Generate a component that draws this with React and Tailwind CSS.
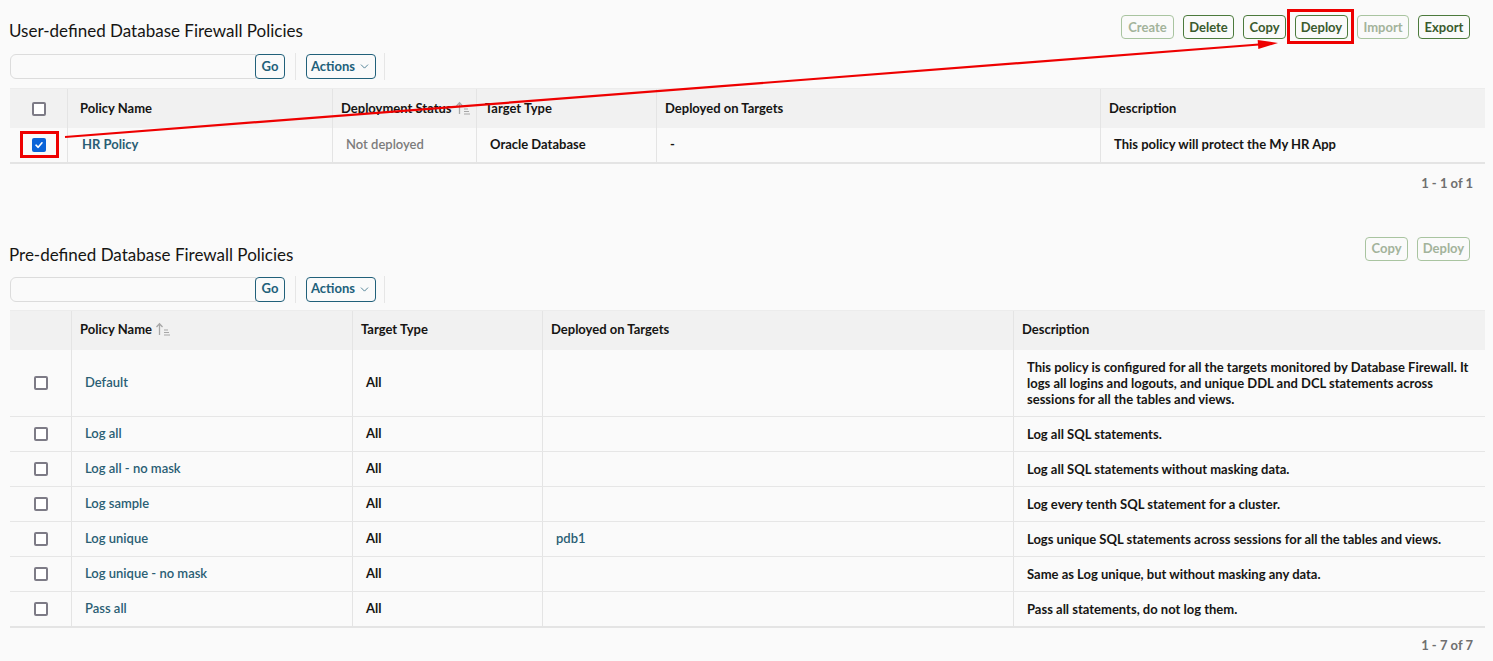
import React from 'react';
import { ChevronDown } from 'lucide-react';

const userPolicies = [
  { name: 'HR Policy', status: 'Not deployed', type: 'Oracle Database', targets: '-', desc: 'This policy will protect the My HR App', checked: true },
];

const predefined = [
  { name: 'Default', type: 'All', targets: '', desc: 'This policy is configured for all the targets monitored by Database Firewall. It logs all logins and logouts, and unique DDL and DCL statements across sessions for all the tables and views.' },
  { name: 'Log all', type: 'All', targets: '', desc: 'Log all SQL statements.' },
  { name: 'Log all - no mask', type: 'All', targets: '', desc: 'Log all SQL statements without masking data.' },
  { name: 'Log sample', type: 'All', targets: '', desc: 'Log every tenth SQL statement for a cluster.' },
  { name: 'Log unique', type: 'All', targets: 'pdb1', desc: 'Logs unique SQL statements across sessions for all the tables and views.' },
  { name: 'Log unique - no mask', type: 'All', targets: '', desc: 'Same as Log unique, but without masking any data.' },
  { name: 'Pass all', type: 'All', targets: '', desc: 'Pass all statements, do not log them.' },
];

function Checkbox({ checked }) {
  if (checked) {
    return (
      <span className="inline-flex w-[14px] h-[14px] rounded-[2px] bg-[#0a63d8] items-center justify-center">
        <svg width="10" height="10" viewBox="0 0 10 10" fill="none">
          <path d="M2 5.2 L4.2 7.3 L8 2.8" stroke="white" strokeWidth="1.6" strokeLinecap="round" strokeLinejoin="round" />
        </svg>
      </span>
    );
  }
  return <span className="inline-block w-[14px] h-[14px] rounded-[2px] border-2 border-[#7d7b86] bg-white" />;
}

function ActionButton({ label, disabled, width }) {
  return (
    <button
      className={`h-[24px] rounded-[4px] border text-[13px] font-bold leading-none bg-[#fafafa] ${width} ${
        disabled ? 'border-[#a9c4a0] text-[#a3b39b]' : 'border-[#4c7a3c] text-[#3b5a2e]'
      }`}
    >
      {label}
    </button>
  );
}

function SortIcon() {
  return (
    <svg width="16" height="14" viewBox="0 0 16 14" className="inline-block ml-[3px] -mt-[2px]" fill="none">
      <path d="M4.5 13 V2 M1.5 5 L4.5 1.8 L7.5 5" stroke="#a7a7a7" strokeWidth="1.3" />
      <path d="M9 8 H13 M9 10.5 H14 M9 13 H15" stroke="#a7a7a7" strokeWidth="1" />
    </svg>
  );
}

function Toolbar() {
  return (
    <div className="flex items-center h-[25px]">
      <div className="w-[246px] h-[25px] border border-[#dcdcdc] rounded-l-[6px] bg-[#fafafa]" />
      <button className="w-[30px] h-[25px] -ml-[1px] border border-[#21607a] rounded-[4px] text-[13px] font-bold text-[#21607a]">Go</button>
      <div className="w-px h-[27px] bg-[#e6e6e6] mx-[10px]" />
      <button className="w-[70px] h-[25px] border border-[#21607a] rounded-[4px] text-[13px] font-bold text-[#21607a] flex items-center justify-center gap-[3px]">
        Actions <ChevronDown size={13} strokeWidth={1.4} />
      </button>
      <div className="w-px h-[27px] bg-[#e6e6e6] ml-[8px]" />
    </div>
  );
}

export default function App() {
  return (
    <div className="relative w-[1493px] h-[661px] bg-[#fafafa] text-[#161513] overflow-hidden" style={{ fontFamily: 'Lato, "Noto Sans", sans-serif' }}>
      <div className="pl-[10px] pr-[8px]">
        {/* User-defined */}
        <div className="flex items-start justify-between pt-[15px]">
          <h2 className="text-[17px] font-normal leading-[24px] -ml-[1px] mt-[4px]">User-defined Database Firewall Policies</h2>
          <div className="flex gap-[9px] pr-[15px]">
            <ActionButton label="Create" disabled width="w-[53px]" />
            <ActionButton label="Delete" width="w-[51px]" />
            <ActionButton label="Copy" width="w-[43px]" />
            <ActionButton label="Deploy" width="w-[53px]" />
            <ActionButton label="Import" disabled width="w-[52px]" />
            <ActionButton label="Export" width="w-[52px]" />
          </div>
        </div>
        <div className="mt-[11px]">
          <Toolbar />
        </div>
        <div className="mt-[9px] border-b-2 border-[#e4e4e4]">
          <div className="grid grid-cols-[58px_265px_144px_180px_444px_1fr] bg-[#f1f1f1] h-[40px] items-center text-[13px] font-bold border-t border-[#ececec]">
            <div className="flex justify-center h-full items-center border-r border-[#e4e4e4]"><Checkbox /></div>
            <div className="pl-[12px] h-full flex items-center border-r border-[#e4e4e4]">Policy Name</div>
            <div className="pl-[8px] h-full flex items-center border-r border-[#e4e4e4] whitespace-nowrap">Deployment Status<SortIcon /></div>
            <div className="pl-[8px] h-full flex items-center border-r border-[#e4e4e4]">Target Type</div>
            <div className="pl-[8px] h-full flex items-center border-r border-[#e4e4e4]">Deployed on Targets</div>
            <div className="pl-[8px] h-full flex items-center">Description</div>
          </div>
          {userPolicies.map(p => (
            <div key={p.name} className="grid grid-cols-[58px_265px_144px_180px_444px_1fr] h-[34px] items-center text-[13px] font-bold">
              <div className="flex justify-center h-full items-center border-r border-[#e4e4e4]"><Checkbox checked={p.checked} /></div>
              <div className="pl-[14px] h-full flex items-center border-r border-[#e4e4e4] text-[#2a5e74]">{p.name}</div>
              <div className="pl-[13px] h-full flex items-center border-r border-[#e4e4e4] text-[#7c7c7c] font-semibold">{p.status}</div>
              <div className="pl-[13px] h-full flex items-center border-r border-[#e4e4e4]">{p.type}</div>
              <div className="pl-[13px] h-full flex items-center border-r border-[#e4e4e4]">{p.targets}</div>
              <div className="pl-[13px] h-full flex items-center">{p.desc}</div>
            </div>
          ))}
        </div>
        <div className="text-right text-[13px] font-bold text-[#6f6f6f] pr-[12px] mt-[10px]">1 - 1 of 1</div>

        {/* Pre-defined */}
        <div className="flex items-start justify-between mt-[43px]">
          <h2 className="text-[17px] font-normal leading-[24px] -ml-[1px] mt-[6px]">Pre-defined Database Firewall Policies</h2>
          <div className="flex gap-[9px] pr-[15px]">
            <ActionButton label="Copy" disabled width="w-[43px]" />
            <ActionButton label="Deploy" disabled width="w-[53px]" />
          </div>
        </div>
        <div className="mt-[10px]">
          <Toolbar />
        </div>
        <div className="mt-[8px] border-b-2 border-[#e4e4e4]">
          <div className="grid grid-cols-[62px_281px_190px_471px_1fr] bg-[#f1f1f1] h-[40px] items-center text-[13px] font-bold border-t border-[#ececec]">
            <div className="h-full border-r border-[#e4e4e4]" />
            <div className="pl-[8px] h-full flex items-center border-r border-[#e4e4e4]">Policy Name<SortIcon /></div>
            <div className="pl-[8px] h-full flex items-center border-r border-[#e4e4e4]">Target Type</div>
            <div className="pl-[8px] h-full flex items-center border-r border-[#e4e4e4]">Deployed on Targets</div>
            <div className="pl-[8px] h-full flex items-center">Description</div>
          </div>
          {predefined.map((p, i) => (
            <div
              key={p.name}
              className={`grid grid-cols-[62px_281px_190px_471px_1fr] text-[13px] font-bold ${i > 0 ? 'border-t border-[#e6e6e6] h-[35px]' : 'h-[66px]'}`}
            >
              <div className="flex justify-center items-center border-r border-[#e4e4e4]"><Checkbox /></div>
              <div className="pl-[13px] flex items-center border-r border-[#e4e4e4] text-[#2a5e74] font-semibold">{p.name}</div>
              <div className="pl-[13px] flex items-center border-r border-[#e4e4e4]">{p.type}</div>
              <div className="pl-[13px] flex items-center border-r border-[#e4e4e4] text-[#2a5e74] font-semibold">{p.targets}</div>
              <div className="pl-[13px] pr-[8px] flex items-center leading-[16px]">{p.desc}</div>
            </div>
          ))}
        </div>
        <div className="text-right text-[13px] font-bold text-[#6f6f6f] pr-[12px] mt-[8px]">1 - 7 of 7</div>
      </div>

      {/* Annotations */}
      <div className="absolute left-[20px] top-[131px] w-[39px] h-[27px] border-[3px] border-[#ee0000]" />
      <div className="absolute left-[1287px] top-[9px] w-[67px] h-[35px] border-[3px] border-[#ee0000]" />
      <svg className="absolute left-0 top-0 pointer-events-none" width="1493" height="661">
        <line x1="65" y1="137" x2="1259" y2="44.5" stroke="#ee0000" strokeWidth="2.2" />
        <polygon points="1278,43 1257.7,40 1258.3,49" fill="#ee0000" />
      </svg>
    </div>
  );
}
